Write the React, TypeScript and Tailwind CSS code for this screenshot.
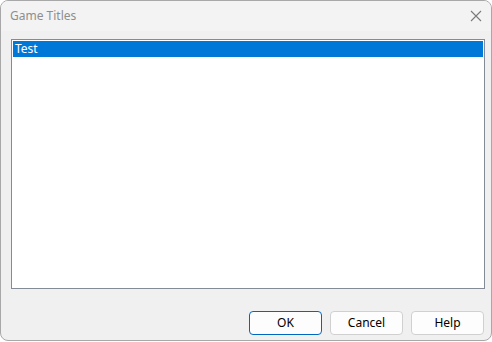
export default function App() {
  return (
    <div className="w-[492px] h-[342px] bg-white" style={{ fontFamily: '"Segoe UI", "Noto Sans", "Open Sans", sans-serif' }}>
      <div className="w-[492px] h-[341px] border border-[#a8a8a8] rounded-[8px] bg-[#f0f0f0] flex flex-col overflow-hidden">
        <div className="h-[30px] bg-[#f3f3f3] flex items-center justify-between pl-[9px] pr-[7px] shrink-0">
          <span className="text-[12px] text-[#8e8e8e] leading-none">Game Titles</span>
          <svg width="14" height="14" viewBox="0 0 14 14" className="mr-[1px]">
            <path d="M2 2 L12 12 M12 2 L2 12" stroke="#7a7a7a" strokeWidth="1.1" />
          </svg>
        </div>
        <div className="pl-[10px] pr-[6px] pt-[8px]">
          <div className="h-[250px] border border-[#848a96] bg-white p-[1px]">
            <div className="h-[16px] bg-[#0078d7] text-white text-[12px] leading-[16px] pl-[2px]">Test</div>
          </div>
        </div>
        <div className="flex justify-end gap-[8px] pr-[7px] mt-[22px]">
          <button className="w-[73px] h-[24px] rounded-[4px] border border-[#0067c0] bg-[#fdfdfd] text-[12px] text-black">OK</button>
          <button className="w-[73px] h-[24px] rounded-[4px] border border-[#d0d0d0] bg-[#fdfdfd] text-[12px] text-black">Cancel</button>
          <button className="w-[73px] h-[24px] rounded-[4px] border border-[#d0d0d0] bg-[#fdfdfd] text-[12px] text-black">Help</button>
        </div>
      </div>
    </div>
  );
}
